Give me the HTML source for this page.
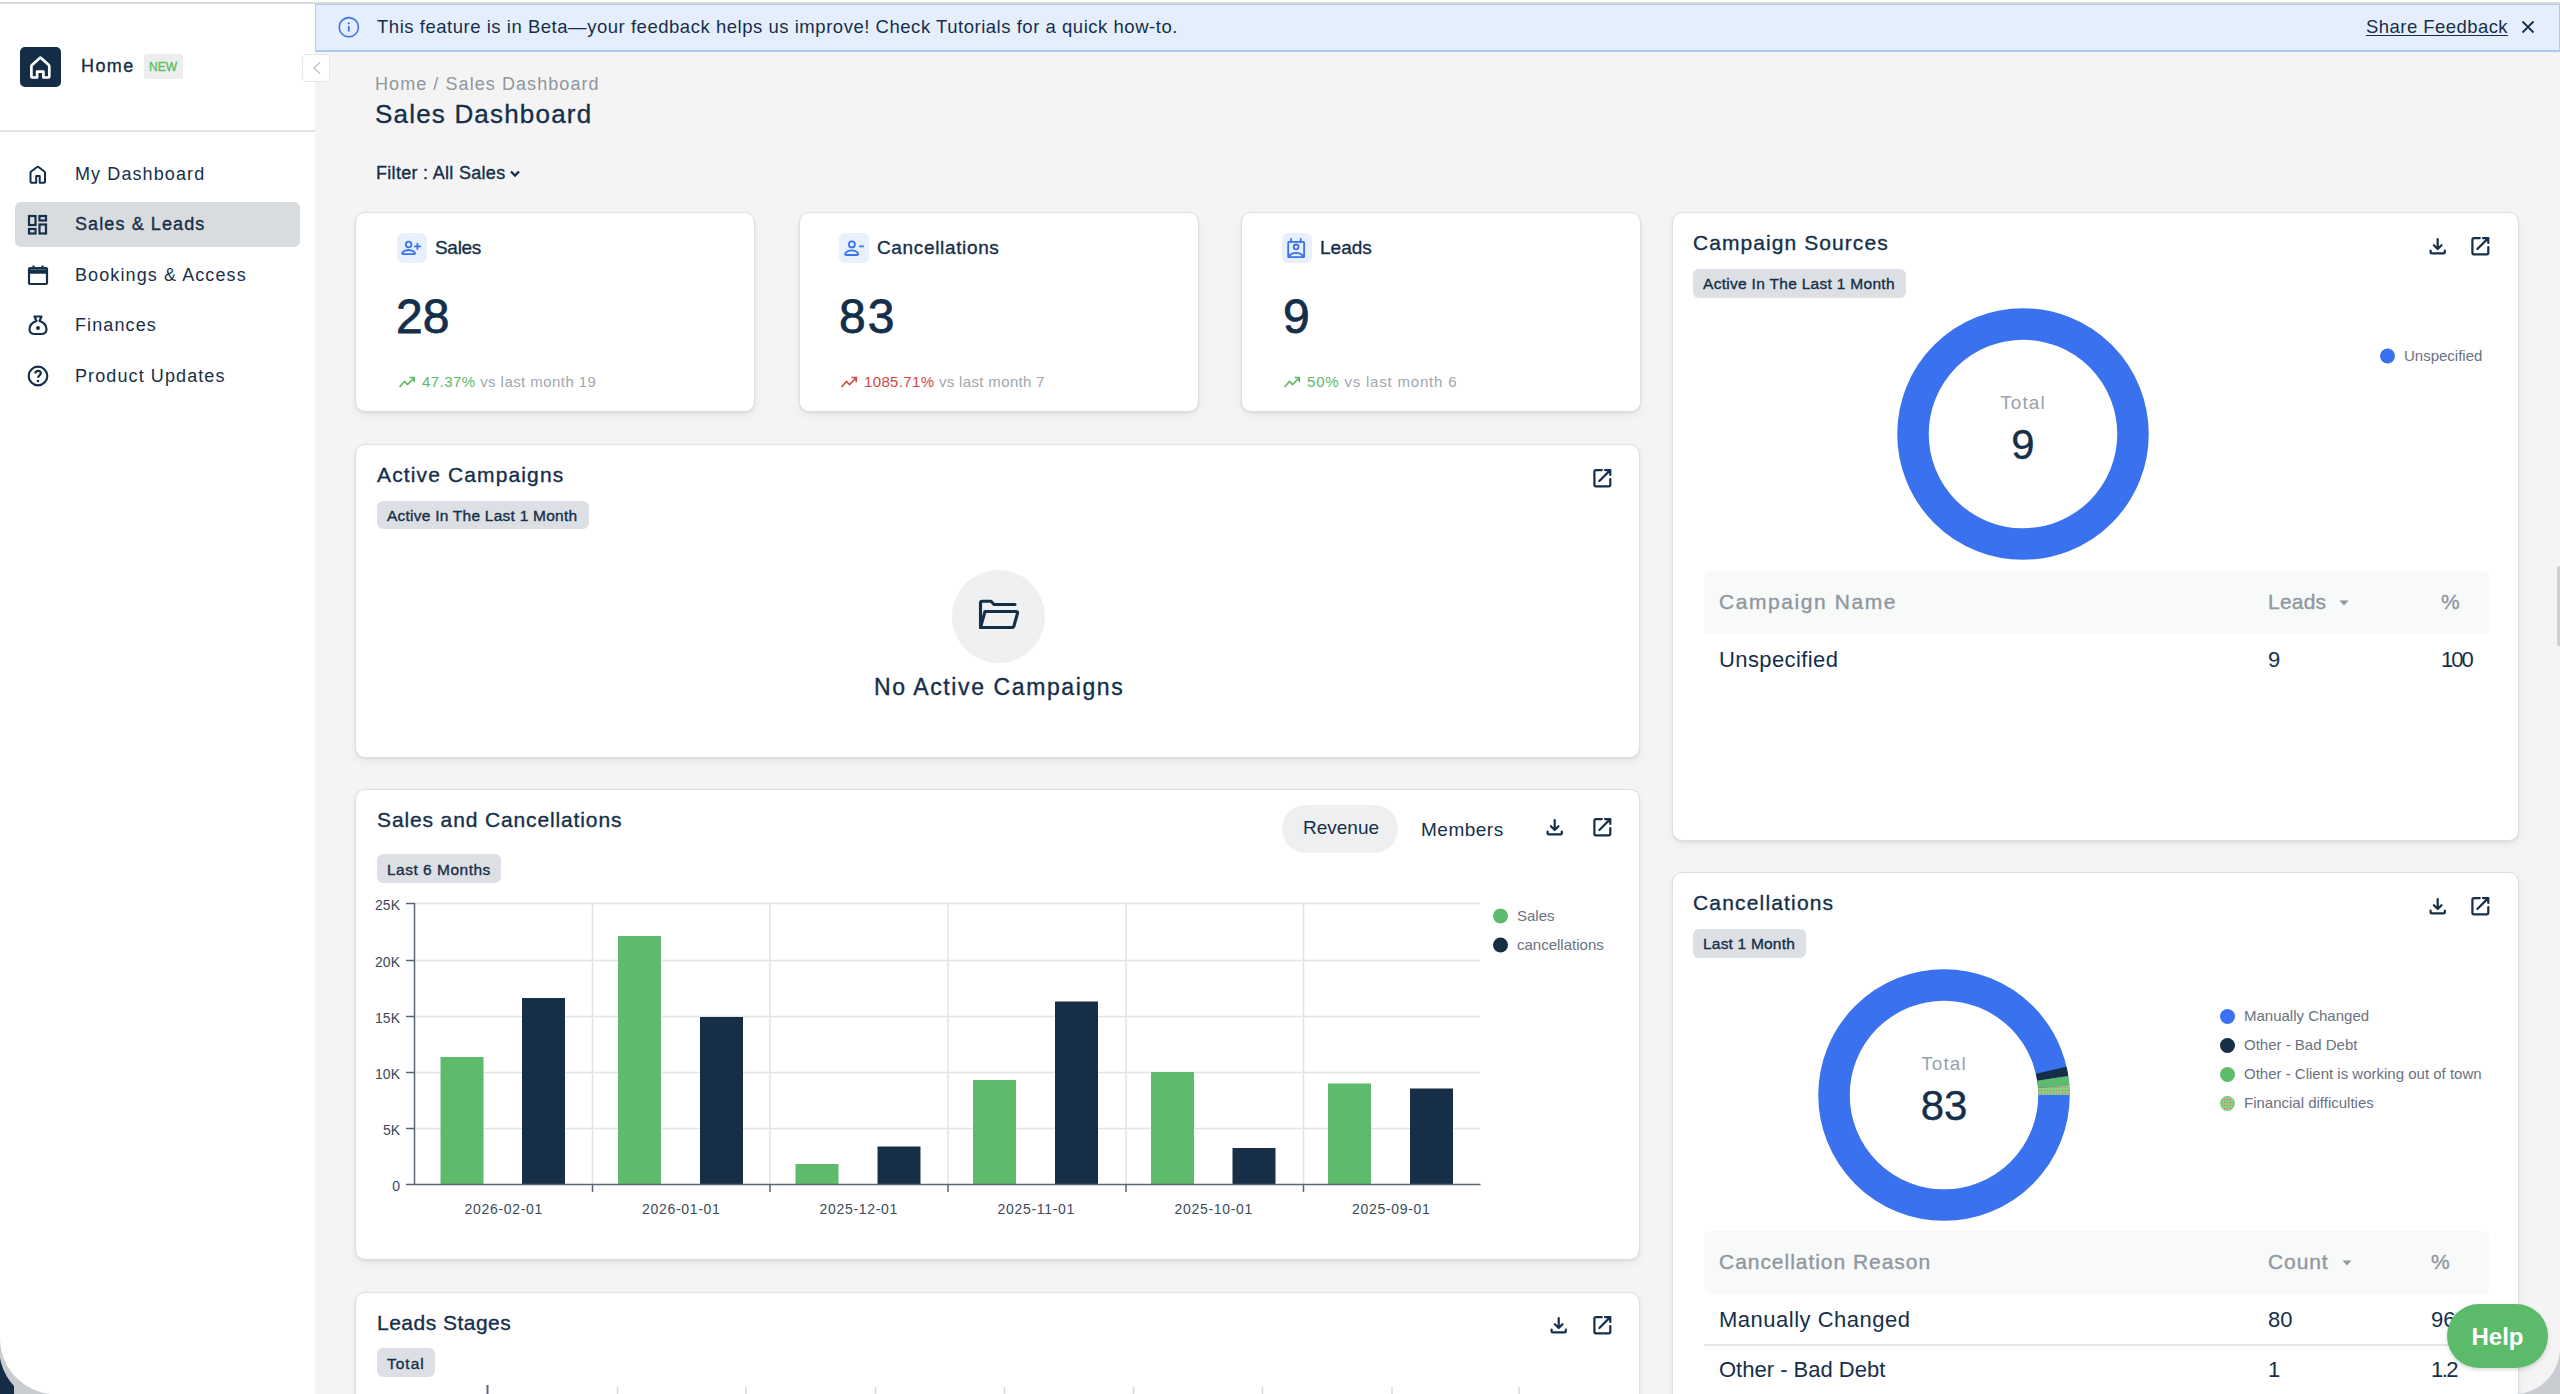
<!DOCTYPE html>
<html><head><meta charset="utf-8">
<style>
*{box-sizing:border-box;margin:0;padding:0}
html,body{width:2560px;height:1394px;overflow:hidden;background:#f4f4f4}
body{font-family:"Liberation Sans",sans-serif;color:#152f4a;position:relative}
.a{position:absolute;white-space:nowrap;line-height:1}
.md{-webkit-text-stroke:0.35px currentColor}
.md8{-webkit-text-stroke:0.8px currentColor}
.card{position:absolute;background:#fff;border:1px solid #dcdfe3;border-radius:10px;box-shadow:0 1px 2px rgba(0,0,0,0.08),0 4px 8px rgba(0,0,0,0.05)}
.badge{position:absolute;background:#dcdfe3;border-radius:6px}
.nav{position:absolute;left:75px;font-size:18px;color:#172f4a}
svg{position:absolute;overflow:visible}
.gray{color:#8f97a1}
.leg{font-size:15px;color:#6b7280}
</style></head>
<body>
<!-- top line -->
<div class="a" style="left:0;top:0;width:2560px;height:4px;background:#fff"></div>
<div class="a" style="left:0;top:2px;width:2560px;height:2px;background:#dadada"></div>

<!-- sidebar -->
<div class="a" style="left:0;top:4px;width:315px;height:1390px;background:#fff"></div>
<div class="a" style="left:0;top:130px;width:315px;height:2px;background:#e3e3e3"></div>
<div class="a" style="left:20px;top:47px;width:41px;height:40px;background:#142c46;border-radius:5px"></div>
<svg style="left:20px;top:47px" width="41" height="40" viewBox="0 0 41 40"><path d="M17.1 30.5 V24.6 H23.4 V30.5 H28.4 Q29.3 30.5 29.3 29.6 V19.3 Q29.3 18.6 28.8 18.1 L21 11 Q20.4 10.5 19.8 11 L12 18.1 Q11.4 18.6 11.4 19.3 V29.6 Q11.4 30.5 12.4 30.5 Z" fill="none" stroke="#fff" stroke-width="2.7" stroke-linejoin="round"/></svg>
<div id="t-home" class="a md" style="left:81px;top:57px;font-size:18px;color:#172f4a;letter-spacing:1.4px">Home</div>
<div class="a" style="left:144px;top:54px;width:39px;height:25px;background:#eceeee;border-radius:3px"></div>
<div id="t-new" class="a md" style="left:149px;top:61px;font-size:12px;color:#5bbf5f">NEW</div>
<!-- collapse btn -->
<div class="a" style="left:302px;top:54px;width:28px;height:28px;background:#fff;border:1px solid #e6e6e6;border-radius:5px"></div>
<svg style="left:302px;top:54px" width="28" height="28"><path d="M18 8.5 L12 14 L18 19.5" fill="none" stroke="#c2c2c2" stroke-width="1.4"/></svg>

<!-- nav -->
<div class="a" style="left:15px;top:202px;width:285px;height:45px;background:#d9dcdf;border-radius:6px"></div>
<svg style="left:26px;top:163px" width="24" height="24"><path d="M10.2 19.7 V13 H13.7 V19.7 H18 Q19 19.7 19 18.7 V9.6 Q19 8.9 18.4 8.5 L12.5 4 Q11.8 3.4 11.1 4 L5.1 8.5 Q4.5 8.9 4.5 9.6 V18.7 Q4.5 19.7 5.5 19.7 Z" fill="none" stroke="#152f4a" stroke-width="2" stroke-linejoin="round"/></svg>
<div id="n1" class="nav a" style="top:165px;letter-spacing:1.1px">My Dashboard</div>
<svg style="left:26px;top:213px" width="24" height="24"><g fill="none" stroke="#152f4a" stroke-width="2.2"><rect x="3" y="3" width="6.5" height="9"/><rect x="13.5" y="3" width="6.5" height="4.5"/><rect x="3" y="16" width="6.5" height="4.5"/><rect x="13.5" y="11.5" width="6.5" height="9"/></g></svg>
<div id="n2" class="nav a md" style="top:215px;letter-spacing:1.1px">Sales &amp; Leads</div>
<svg style="left:26px;top:263px" width="24" height="24"><g fill="none" stroke="#152f4a" stroke-width="2.2"><rect x="3" y="5" width="18" height="16" rx="1"/><path d="M3 8.5 H21" stroke-width="4.5"/><path d="M7.5 2.5 V6 M16.5 2.5 V6"/></g></svg>
<div id="n3" class="nav a" style="top:266px;letter-spacing:1.1px">Bookings &amp; Access</div>
<svg style="left:26px;top:313px" width="24" height="24"><g fill="none" stroke="#152f4a" stroke-width="2.2"><path d="M8.5 3.5 H15.5 L13.5 8 C18 9.5 20.5 13 20.5 16.5 C20.5 19.5 18 21 15.5 21 H8.5 C6 21 3.5 19.5 3.5 16.5 C3.5 13 6 9.5 10.5 8 Z" stroke-linejoin="round"/></g><circle cx="12" cy="15" r="2" fill="#152f4a"/></svg>
<div id="n4" class="nav a" style="top:316px;letter-spacing:1.1px">Finances</div>
<svg style="left:26px;top:364px" width="24" height="24"><g fill="none" stroke="#152f4a" stroke-width="2.2"><circle cx="12" cy="12" r="9.3"/><path d="M9.3 9.5 C9.3 7.8 10.5 6.8 12 6.8 C13.6 6.8 14.8 7.8 14.8 9.3 C14.8 11.2 12 11.5 12 13.8"/></g><circle cx="12" cy="17" r="1.3" fill="#152f4a"/></svg>
<div id="n5" class="nav a" style="top:367px;letter-spacing:1.1px">Product Updates</div>

<!-- bottom-left corner -->
<svg style="left:0;top:1330px" width="70" height="64"><path d="M0 0 V64 H60 A56 56 0 0 1 0 8 Z" fill="#c9ccd0"/><path d="M0 8 V64 H14 V56 A56 56 0 0 1 0 8 Z" fill="#142c46"/></svg>
<!-- banner -->
<div class="a" style="left:315px;top:4px;width:2245px;height:48px;background:#e5eefc;border:1px solid #adc9f8;border-bottom:2px solid #adc9f8"></div>
<svg style="left:337px;top:16px" width="24" height="24"><circle cx="11.8" cy="11.2" r="9.6" fill="none" stroke="#3a73ee" stroke-width="1.6"/><path d="M11.8 10 V15.5" stroke="#3a73ee" stroke-width="1.8"/><circle cx="11.8" cy="7.3" r="1.1" fill="#3a73ee"/></svg>
<div id="t-banner" class="a" style="left:377px;top:18px;font-size:18.5px;color:#172f4a;letter-spacing:0.53px">This feature is in Beta—your feedback helps us improve! Check Tutorials for a quick how-to.</div>
<div id="t-share" class="a" style="left:2366px;top:18px;font-size:18.5px;color:#172f4a;text-decoration:underline;text-underline-offset:2px;letter-spacing:0.45px">Share Feedback</div>
<svg style="left:2520px;top:19px" width="16" height="16"><path d="M2.5 2.5 L13.5 13.5 M13.5 2.5 L2.5 13.5" stroke="#172f4a" stroke-width="1.8"/></svg>

<!-- header -->
<div id="t-bc" class="a gray" style="left:375px;top:75px;font-size:18px;color:#8e969f;letter-spacing:1.07px">Home / Sales Dashboard</div>
<div id="t-title" class="a md" style="left:375px;top:101px;font-size:26px;color:#152f4a;letter-spacing:1.19px">Sales Dashboard</div>
<div id="t-filter" class="a md" style="left:376px;top:164px;font-size:18px;color:#152f4a;letter-spacing:0.3px">Filter : All Sales</div>
<svg style="left:508px;top:168px" width="14" height="12"><path d="M3 3.5 L7 7.5 L11 3.5" fill="none" stroke="#152f4a" stroke-width="2.3"/></svg>

<!-- STAT CARDS -->
<div class="card" style="left:355px;top:212px;width:400px;height:200px"></div>
<div class="card" style="left:799px;top:212px;width:400px;height:200px"></div>
<div class="card" style="left:1241px;top:212px;width:400px;height:200px"></div>

<!-- card 1 -->
<div class="a" style="left:397px;top:233px;width:30px;height:30px;background:#e8effd;border-radius:6px"></div>
<svg style="left:397px;top:233px" width="30" height="31"><g fill="none" stroke="#3a73ee" stroke-width="1.8" stroke-linecap="round" stroke-linejoin="round"><circle cx="11.6" cy="11.5" r="2.8"/><path d="M6.2 21.2 C5.1 21.2 4.9 20.1 5.6 19.3 C6.8 17.9 8.6 17 11.6 17 C14.6 17 16.4 17.9 17.6 19.3 C18.3 20.1 18.1 21.2 17 21.2 Z"/><path d="M17.7 13.4 H23.1 M20.4 10.7 V16.1"/></g></svg>
<div id="s1t" class="a md" style="left:435px;top:238px;font-size:19px;letter-spacing:-0.3px">Sales</div>
<div id="s1n" class="a md8" style="left:396px;top:292.5px;font-size:48px">28</div>
<svg style="left:398px;top:375px" width="18" height="14"><path d="M1.5 12 L6.5 6.5 L9.5 9.5 L16 3 M11.5 2.5 H16.2 V7.2" fill="none" stroke="#5cb865" stroke-width="1.6"/></svg>
<div id="s1p" class="a" style="left:422px;top:373.5px;font-size:15px;letter-spacing:0.44px"><span style="color:#5cb865">47.37%</span> <span style="color:#a0a7ad">vs last month 19</span></div>

<!-- card 2 -->
<div class="a" style="left:839px;top:233px;width:30px;height:30px;background:#e8effd;border-radius:6px"></div>
<svg style="left:839px;top:233px" width="30" height="31"><g fill="none" stroke="#3a73ee" stroke-width="1.8" stroke-linecap="round" stroke-linejoin="round"><circle cx="12.9" cy="11.4" r="3"/><path d="M7.2 22 C6 22 5.8 20.8 6.6 19.9 C7.9 18.3 9.8 17.3 12.7 17.3 C15.6 17.3 17.5 18.3 18.8 19.9 C19.6 20.8 19.4 22 18.2 22 Z"/><path d="M20.8 13.4 H24"/></g></svg>
<div id="s2t" class="a md" style="left:877px;top:238px;font-size:19px;letter-spacing:0.65px">Cancellations</div>
<div id="s2n" class="a md8" style="left:839px;top:292.5px;font-size:48px;letter-spacing:2px">83</div>
<svg style="left:840px;top:375px" width="18" height="14"><path d="M1.5 12 L6.5 6.5 L9.5 9.5 L16 3 M11.5 2.5 H16.2 V7.2" fill="none" stroke="#d5473e" stroke-width="1.6"/></svg>
<div id="s2p" class="a" style="left:864px;top:373.5px;font-size:15px;letter-spacing:0.35px"><span style="color:#d5473e">1085.71%</span> <span style="color:#a0a7ad">vs last month 7</span></div>

<!-- card 3 -->
<div class="a" style="left:1282px;top:233px;width:30px;height:30px;background:#e8effd;border-radius:6px"></div>
<svg style="left:1282px;top:233px" width="30" height="31"><g fill="none" stroke="#3a73ee" stroke-width="1.8" stroke-linejoin="round"><rect x="6.2" y="8.8" width="15.9" height="15.3" rx="0.6"/><path d="M9.1 5.8 V9 M18.7 5.8 V9" stroke-linecap="round"/><circle cx="14.1" cy="13.9" r="2.4"/><path d="M6.5 23.6 C8.5 21 11 19.8 14.1 19.8 C17.2 19.8 19.7 21 21.8 23.6"/></g></svg>
<div id="s3t" class="a md" style="left:1320px;top:238px;font-size:19px">Leads</div>
<div id="s3n" class="a md8" style="left:1283px;top:292.5px;font-size:48px">9</div>
<svg style="left:1283px;top:375px" width="18" height="14"><path d="M1.5 12 L6.5 6.5 L9.5 9.5 L16 3 M11.5 2.5 H16.2 V7.2" fill="none" stroke="#5cb865" stroke-width="1.6"/></svg>
<div id="s3p" class="a" style="left:1307px;top:373.5px;font-size:15px;letter-spacing:0.8px"><span style="color:#5cb865">50%</span> <span style="color:#a0a7ad">vs last month 6</span></div>

<!-- ACTIVE CAMPAIGNS -->
<div class="card" style="left:355px;top:444px;width:1285px;height:314px"></div>
<div id="t-ac" class="a md" style="left:377px;top:464px;font-size:21px;letter-spacing:1.13px">Active Campaigns</div>
<div class="badge" style="left:377px;top:501px;width:212px;height:28px"></div>
<div id="b-ac" class="a md" style="left:387px;top:508px;font-size:15.5px;letter-spacing:0.24px">Active In The Last 1 Month</div>
<svg style="left:1590px;top:466px" width="24" height="24"><path d="M11.8 4.1 H6 C5 4.1 4.4 4.7 4.4 5.7 V18.8 C4.4 19.8 5 20.4 6 20.4 H18.7 C19.7 20.4 20.3 19.8 20.3 18.8 V13 M15 4.1 H20.3 V9 M20 4.4 L9.4 15" fill="none" stroke="#152f4a" stroke-width="2.2" stroke-linecap="round" stroke-linejoin="round"/></svg>
<div class="a" style="left:952px;top:570px;width:93px;height:93px;border-radius:50%;background:#eff0f2"></div>
<svg style="left:978px;top:599px" width="42" height="34"><g fill="none" stroke="#152f4a" stroke-width="3.1" stroke-linejoin="round" stroke-linecap="round"><path d="M2.5 28.5 V4 C2.5 2.8 3.2 2.2 4.3 2.2 H13 L16 5.5 H37"/><path d="M2.5 28.5 L7 12.5 H38 C39.2 12.5 39.8 13.3 39.5 14.3 L35.8 27.5 C35.5 28.2 35 28.5 34.3 28.5 Z"/></g></svg>
<div id="t-noac" class="a md" style="left:874px;top:676px;font-size:23px;letter-spacing:1.6px">No Active Campaigns</div>

<!-- SALES AND CANCELLATIONS -->
<div class="card" style="left:355px;top:789px;width:1285px;height:471px"></div>
<div id="t-sc" class="a md" style="left:377px;top:809px;font-size:21px;letter-spacing:0.87px">Sales and Cancellations</div>
<div class="a" style="left:1282px;top:805px;width:116px;height:48px;border-radius:24px;background:#eeeff0"></div>
<div id="t-rev" class="a" style="left:1303px;top:818px;font-size:19px">Revenue</div>
<div id="t-mem" class="a" style="left:1421px;top:820px;font-size:19px;letter-spacing:0.5px">Members</div>
<svg style="left:1542px;top:815px" width="24" height="24"><path d="M12.7 5 V15 M8.9 11.2 L12.7 15 L16.5 11.2 M5.6 16.5 V18 C5.6 18.9 6.2 19.4 7 19.4 H18.4 C19.2 19.4 19.8 18.9 19.8 18 V16.5" fill="none" stroke="#152f4a" stroke-width="2.2" stroke-linecap="round" stroke-linejoin="round"/></svg>
<svg style="left:1590px;top:815px" width="24" height="24"><path d="M11.8 4.1 H6 C5 4.1 4.4 4.7 4.4 5.7 V18.8 C4.4 19.8 5 20.4 6 20.4 H18.7 C19.7 20.4 20.3 19.8 20.3 18.8 V13 M15 4.1 H20.3 V9 M20 4.4 L9.4 15" fill="none" stroke="#152f4a" stroke-width="2.2" stroke-linecap="round" stroke-linejoin="round"/></svg>
<div class="badge" style="left:377px;top:854px;width:124px;height:29px"></div>
<div id="b-sc" class="a md" style="left:387px;top:862px;font-size:15.5px;letter-spacing:0.5px">Last 6 Months</div>

<!-- chart -->
<svg style="left:0;top:0" width="2560" height="1394">
 <g stroke="#e3e4e6" stroke-width="1.5">
  <path d="M415 903.5 H1480 M415 960.5 H1480 M415 1016.5 H1480 M415 1072.5 H1480 M415 1128.5 H1480"/>
  <path d="M592.5 903 V1184 M770 903 V1184 M948 903 V1184 M1126 903 V1184 M1303.5 903 V1184"/>
 </g>
 <g fill="#5dbb6b">
  <rect x="440.5" y="1057" width="43" height="127.5"/>
  <rect x="618" y="936" width="43" height="248.5"/>
  <rect x="795.5" y="1164" width="43" height="20.5"/>
  <rect x="973" y="1080" width="43" height="104.5"/>
  <rect x="1151" y="1072" width="43" height="112.5"/>
  <rect x="1328" y="1083.5" width="43" height="101"/>
 </g>
 <g fill="#172e47">
  <rect x="522" y="998" width="43" height="186.5"/>
  <rect x="700" y="1017" width="43" height="167.5"/>
  <rect x="877.5" y="1146.5" width="43" height="38"/>
  <rect x="1055" y="1001.5" width="43" height="183"/>
  <rect x="1232.5" y="1148" width="43" height="36.5"/>
  <rect x="1410" y="1088.5" width="43" height="96"/>
 </g>
 <g stroke="#5b6675" stroke-width="1.5">
  <path d="M414.5 903 V1185 M406 1184.5 H1480.5"/>
  <path d="M406 903.5 H415 M406 960.5 H415 M406 1016.5 H415 M406 1072.5 H415 M406 1128.5 H415"/>
  <path d="M592.5 1185 V1192 M770 1185 V1192 M948 1185 V1192 M1126 1185 V1192 M1303.5 1185 V1192"/>
 </g>
 <circle cx="1500.5" cy="916" r="7.5" fill="#5dbb6b"/>
 <circle cx="1500.5" cy="945" r="7.5" fill="#172e47"/>
</svg>
<div class="a" style="left:300px;top:898px;width:100px;font-size:14px;color:#3c4a5b;text-align:right">25K</div>
<div class="a" style="left:300px;top:955px;width:100px;font-size:14px;color:#3c4a5b;text-align:right">20K</div>
<div class="a" style="left:300px;top:1011px;width:100px;font-size:14px;color:#3c4a5b;text-align:right">15K</div>
<div class="a" style="left:300px;top:1067px;width:100px;font-size:14px;color:#3c4a5b;text-align:right">10K</div>
<div class="a" style="left:300px;top:1123px;width:100px;font-size:14px;color:#3c4a5b;text-align:right">5K</div>
<div class="a" style="left:300px;top:1179px;width:100px;font-size:14px;color:#3c4a5b;text-align:right">0</div>
<div class="a" style="left:415px;top:1202px;width:177.5px;font-size:14px;color:#3c4a5b;text-align:center;letter-spacing:0.7px">2026-02-01</div>
<div class="a" style="left:592.5px;top:1202px;width:177.5px;font-size:14px;color:#3c4a5b;text-align:center;letter-spacing:0.7px">2026-01-01</div>
<div class="a" style="left:770px;top:1202px;width:177.5px;font-size:14px;color:#3c4a5b;text-align:center;letter-spacing:0.7px">2025-12-01</div>
<div class="a" style="left:947.5px;top:1202px;width:177.5px;font-size:14px;color:#3c4a5b;text-align:center;letter-spacing:0.7px">2025-11-01</div>
<div class="a" style="left:1125px;top:1202px;width:177.5px;font-size:14px;color:#3c4a5b;text-align:center;letter-spacing:0.7px">2025-10-01</div>
<div class="a" style="left:1302.5px;top:1202px;width:177.5px;font-size:14px;color:#3c4a5b;text-align:center;letter-spacing:0.7px">2025-09-01</div>
<div class="a leg" style="left:1517px;top:908px">Sales</div>
<div class="a leg" style="left:1517px;top:937px">cancellations</div>

<!-- LEADS STAGES -->
<div class="card" style="left:355px;top:1292px;width:1285px;height:200px"></div>
<div id="t-ls" class="a md" style="left:377px;top:1312px;font-size:21px;letter-spacing:0.48px">Leads Stages</div>
<div class="badge" style="left:377px;top:1348px;width:58px;height:29px"></div>
<div id="b-ls" class="a md" style="left:387px;top:1356px;font-size:15.5px;letter-spacing:1.0px">Total</div>
<svg style="left:1546px;top:1313px" width="24" height="24"><path d="M12.7 5 V15 M8.9 11.2 L12.7 15 L16.5 11.2 M5.6 16.5 V18 C5.6 18.9 6.2 19.4 7 19.4 H18.4 C19.2 19.4 19.8 18.9 19.8 18 V16.5" fill="none" stroke="#152f4a" stroke-width="2.2" stroke-linecap="round" stroke-linejoin="round"/></svg>
<svg style="left:1590px;top:1313px" width="24" height="24"><path d="M11.8 4.1 H6 C5 4.1 4.4 4.7 4.4 5.7 V18.8 C4.4 19.8 5 20.4 6 20.4 H18.7 C19.7 20.4 20.3 19.8 20.3 18.8 V13 M15 4.1 H20.3 V9 M20 4.4 L9.4 15" fill="none" stroke="#152f4a" stroke-width="2.2" stroke-linecap="round" stroke-linejoin="round"/></svg>
<svg style="left:0;top:0" width="2560" height="1394"><g stroke="#d5d7da" stroke-width="1.5"><path d="M617.5 1387 V1394 M746 1387 V1394 M875.5 1387 V1394 M1004.5 1387 V1394 M1133.5 1387 V1394 M1262.5 1387 V1394 M1392 1387 V1394 M1519 1387 V1394"/></g><path d="M487.5 1385 V1394" stroke="#5b6675" stroke-width="2"/></svg>

<!-- CAMPAIGN SOURCES -->
<div class="card" style="left:1672px;top:212px;width:847px;height:629px"></div>
<div id="t-cs" class="a md" style="left:1693px;top:232px;font-size:21px;letter-spacing:1.07px">Campaign Sources</div>
<div class="badge" style="left:1693px;top:269px;width:213px;height:29px"></div>
<div id="b-cs" class="a md" style="left:1703px;top:276px;font-size:15.5px;letter-spacing:0.3px">Active In The Last 1 Month</div>
<svg style="left:2425px;top:234px" width="24" height="24"><path d="M12.7 5 V15 M8.9 11.2 L12.7 15 L16.5 11.2 M5.6 16.5 V18 C5.6 18.9 6.2 19.4 7 19.4 H18.4 C19.2 19.4 19.8 18.9 19.8 18 V16.5" fill="none" stroke="#152f4a" stroke-width="2.2" stroke-linecap="round" stroke-linejoin="round"/></svg>
<svg style="left:2468px;top:234px" width="24" height="24"><path d="M11.8 4.1 H6 C5 4.1 4.4 4.7 4.4 5.7 V18.8 C4.4 19.8 5 20.4 6 20.4 H18.7 C19.7 20.4 20.3 19.8 20.3 18.8 V13 M15 4.1 H20.3 V9 M20 4.4 L9.4 15" fill="none" stroke="#152f4a" stroke-width="2.2" stroke-linecap="round" stroke-linejoin="round"/></svg>
<svg style="left:0;top:0" width="2560" height="1394">
 <circle cx="2023" cy="434" r="110" fill="none" stroke="#3a71ee" stroke-width="31.5"/>
 <circle cx="2387.5" cy="356" r="7.5" fill="#3a71ee"/>
</svg>
<div id="t-tot1" class="a" style="left:1973px;top:393px;width:100px;text-align:center;font-size:19px;color:#9aa2ab;letter-spacing:1.05px">Total</div>
<div id="t-nine" class="a md" style="left:1973px;top:423.5px;width:100px;text-align:center;font-size:42px;color:#152f4a">9</div>
<div class="a leg" style="left:2404px;top:348px">Unspecified</div>
<div class="a" style="left:1704px;top:571px;width:785px;height:63px;background:#f8f9f9;border-radius:6px"></div>
<div id="h-cn" class="a md" style="left:1719px;top:591px;font-size:21px;color:#8f97a0;letter-spacing:1.57px">Campaign Name</div>
<div id="h-leads" class="a md" style="left:2268px;top:591px;font-size:21px;color:#8f97a0;letter-spacing:0.2px">Leads</div>
<svg style="left:2338px;top:598px" width="12" height="10"><path d="M1.5 2.5 H10.5 L6 7.5 Z" fill="#8f97a0"/></svg>
<div id="h-pct" class="a md" style="left:2441px;top:591px;font-size:21px;color:#8f97a0">%</div>
<div id="r-un" class="a" style="left:1719px;top:648.5px;font-size:22px;color:#152f4a;letter-spacing:0.4px">Unspecified</div>
<div class="a" style="left:2268px;top:648.5px;font-size:22px;color:#152f4a">9</div>
<div class="a" style="left:2441px;top:648.5px;font-size:22px;color:#152f4a;letter-spacing:-2px">100</div>

<!-- CANCELLATIONS -->
<div class="card" style="left:1672px;top:872px;width:847px;height:600px"></div>
<div id="t-cc" class="a md" style="left:1693px;top:892px;font-size:21px;letter-spacing:1.17px">Cancellations</div>
<div class="badge" style="left:1693px;top:929px;width:113px;height:29px"></div>
<div id="b-cc" class="a md" style="left:1703px;top:936px;font-size:15.5px;letter-spacing:0.2px">Last 1 Month</div>
<svg style="left:2425px;top:894px" width="24" height="24"><path d="M12.7 5 V15 M8.9 11.2 L12.7 15 L16.5 11.2 M5.6 16.5 V18 C5.6 18.9 6.2 19.4 7 19.4 H18.4 C19.2 19.4 19.8 18.9 19.8 18 V16.5" fill="none" stroke="#152f4a" stroke-width="2.2" stroke-linecap="round" stroke-linejoin="round"/></svg>
<svg style="left:2468px;top:894px" width="24" height="24"><path d="M11.8 4.1 H6 C5 4.1 4.4 4.7 4.4 5.7 V18.8 C4.4 19.8 5 20.4 6 20.4 H18.7 C19.7 20.4 20.3 19.8 20.3 18.8 V13 M15 4.1 H20.3 V9 M20 4.4 L9.4 15" fill="none" stroke="#152f4a" stroke-width="2.2" stroke-linecap="round" stroke-linejoin="round"/></svg>
<svg style="left:0;top:0" width="2560" height="1394">
 <defs><pattern id="dots" width="3" height="3" patternUnits="userSpaceOnUse"><rect width="3" height="3" fill="#8ccd84"/><rect x="1" y="1" width="1" height="1" fill="#e06a5e"/></pattern></defs>
 <circle cx="1944" cy="1095" r="110" fill="none" stroke="#3a71ee" stroke-width="31.5"/>
 <path d="M2052.74 1078.41 A110 110 0 0 0 2051.18 1070.23" fill="none" stroke="#172e47" stroke-width="31.5"/>
 <path d="M2053.68 1086.68 A110 110 0 0 0 2052.74 1078.41" fill="none" stroke="#5dbb6b" stroke-width="31.5"/>
 <path d="M2054.00 1095.00 A110 110 0 0 0 2053.68 1086.68" fill="none" stroke="url(#dots)" stroke-width="31.5"/>
 <circle cx="2227.5" cy="1016.5" r="7.5" fill="#3a71ee"/>
 <circle cx="2227.5" cy="1045.5" r="7.5" fill="#172e47"/>
 <circle cx="2227.5" cy="1074.5" r="7.5" fill="#5dbb6b"/>
 <circle cx="2227.5" cy="1103.5" r="7.5" fill="url(#dots)"/>
</svg>
<div id="t-tot2" class="a" style="left:1894px;top:1054px;width:100px;text-align:center;font-size:19px;color:#9aa2ab;letter-spacing:1.05px">Total</div>
<div id="t-83" class="a md" style="left:1894px;top:1084.5px;width:100px;text-align:center;font-size:42px;color:#152f4a">83</div>
<div class="a leg" style="left:2244px;top:1008px">Manually Changed</div>
<div class="a leg" style="left:2244px;top:1037px">Other - Bad Debt</div>
<div class="a leg" style="left:2244px;top:1066px">Other - Client is working out of town</div>
<div class="a leg" style="left:2244px;top:1095px">Financial difficulties</div>
<div class="a" style="left:1704px;top:1231px;width:785px;height:63px;background:#f8f9f9;border-radius:6px"></div>
<div id="h-cr" class="a md" style="left:1719px;top:1250.5px;font-size:21px;color:#8f97a0;letter-spacing:0.96px">Cancellation Reason</div>
<div id="h-count" class="a md" style="left:2268px;top:1250.5px;font-size:21px;color:#8f97a0;letter-spacing:0.9px">Count</div>
<svg style="left:2341px;top:1258px" width="12" height="10"><path d="M1.5 2.5 H10.5 L6 7.5 Z" fill="#8f97a0"/></svg>
<div id="h-pct2" class="a md" style="left:2431px;top:1250.5px;font-size:21px;color:#8f97a0">%</div>
<div id="r-mc" class="a" style="left:1719px;top:1308.5px;font-size:22px;color:#152f4a;letter-spacing:0.5px">Manually Changed</div>
<div class="a" style="left:2268px;top:1308.5px;font-size:22px;color:#152f4a">80</div>
<div class="a" style="left:2431px;top:1308.5px;font-size:22px;color:#152f4a">96</div>
<div class="a" style="left:1704px;top:1344px;width:785px;height:2px;background:#e4e6e9"></div>
<div id="r-bd" class="a" style="left:1719px;top:1359px;font-size:22px;color:#152f4a">Other - Bad Debt</div>
<div class="a" style="left:2268px;top:1359px;font-size:22px;color:#152f4a">1</div>
<div class="a" style="left:2431px;top:1359px;font-size:22px;color:#152f4a;letter-spacing:-1.5px">1.2</div>

<!-- bottom-right corner -->
<svg style="left:2514px;top:1348px" width="46" height="46"><path d="M46 0 V46 H0 A46 46 0 0 0 46 0 Z" fill="#c9cdd2"/></svg>
<div class="a" style="left:2557px;top:566px;width:3px;height:80px;background:#cfd0d2;border-radius:2px 0 0 2px"></div>
<!-- help -->
<div class="a" style="left:2447px;top:1304px;width:101px;height:64px;border-radius:32px;background:#5cbb6a;box-shadow:0 2px 4px rgba(0,0,0,0.15)"></div>
<div id="t-help" class="a" style="left:2447px;top:1324.5px;width:101px;text-align:center;font-size:24px;font-weight:bold;color:#fff">Help</div>
</body></html>
